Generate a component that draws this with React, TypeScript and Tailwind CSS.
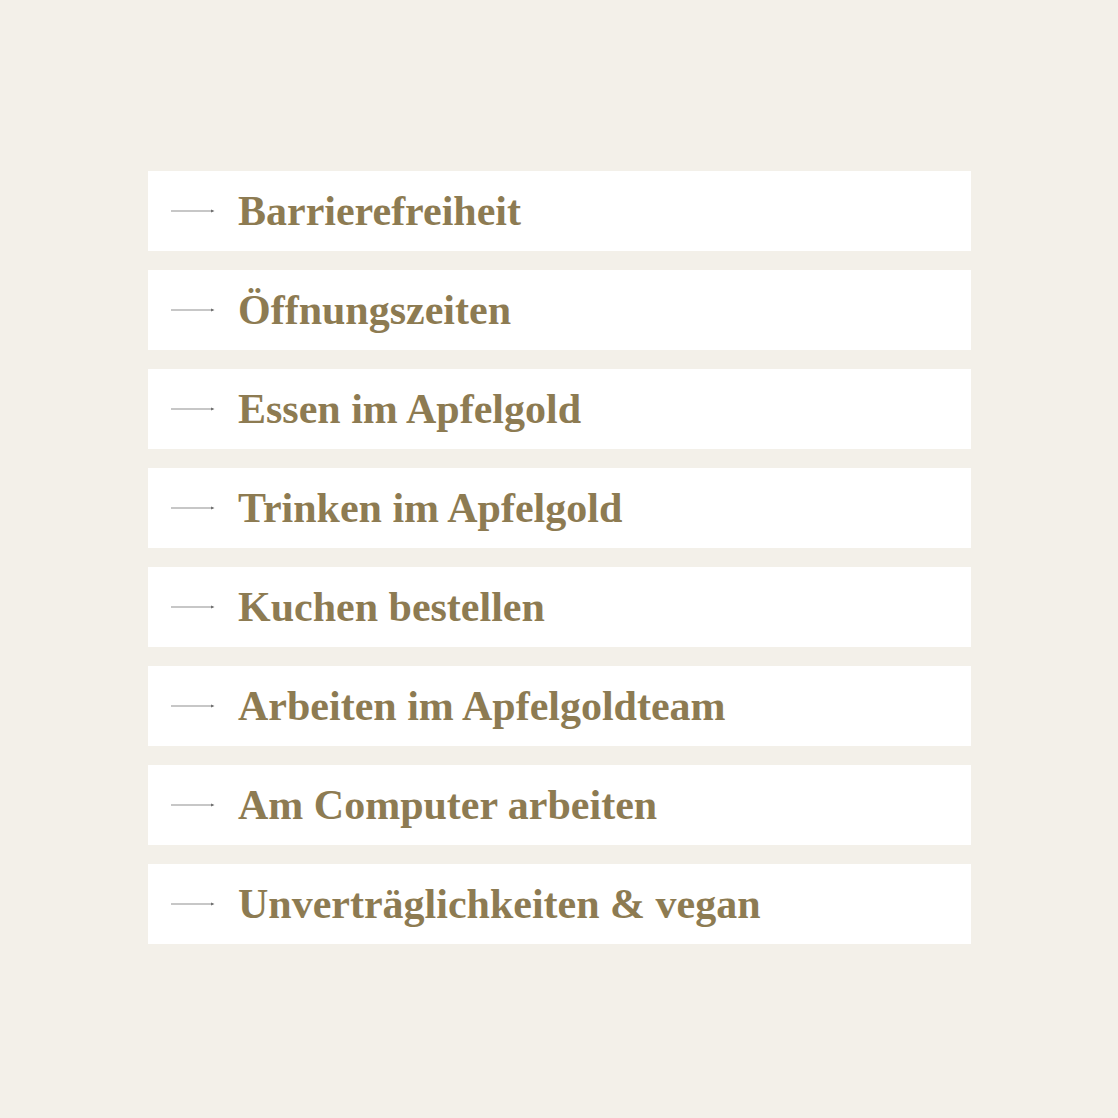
const ITEMS = [
  'Barrierefreiheit',
  'Öffnungszeiten',
  'Essen im Apfelgold',
  'Trinken im Apfelgold',
  'Kuchen bestellen',
  'Arbeiten im Apfelgoldteam',
  'Am Computer arbeiten',
  'Unverträglichkeiten & vegan',
]

function Arrow() {
  return (
    <svg width="44" height="6" viewBox="0 0 44 6" className="shrink-0">
      <line x1="0" y1="3" x2="42" y2="3" stroke="#8f8f8f" strokeWidth="1" />
      <path d="M40 1.5 L43.5 3 L40 4.5 Z" fill="#6f6f6f" />
    </svg>
  )
}

export default function App() {
  return (
    <div className="min-h-[1118px] w-full bg-[#f3f0e9] pt-[171px] pl-[148px]">
      <ul className="flex w-[823px] flex-col gap-[19px]">
        {ITEMS.map(item => (
          <li key={item} className="flex h-[80px] items-center bg-white pl-[23px]">
            <Arrow />
            <span
              className="ml-[23px] text-[42px] font-bold leading-none text-[#8d7b52]"
              style={{ fontFamily: '"Liberation Serif", serif' }}
            >
              {item}
            </span>
          </li>
        ))}
      </ul>
    </div>
  )
}
